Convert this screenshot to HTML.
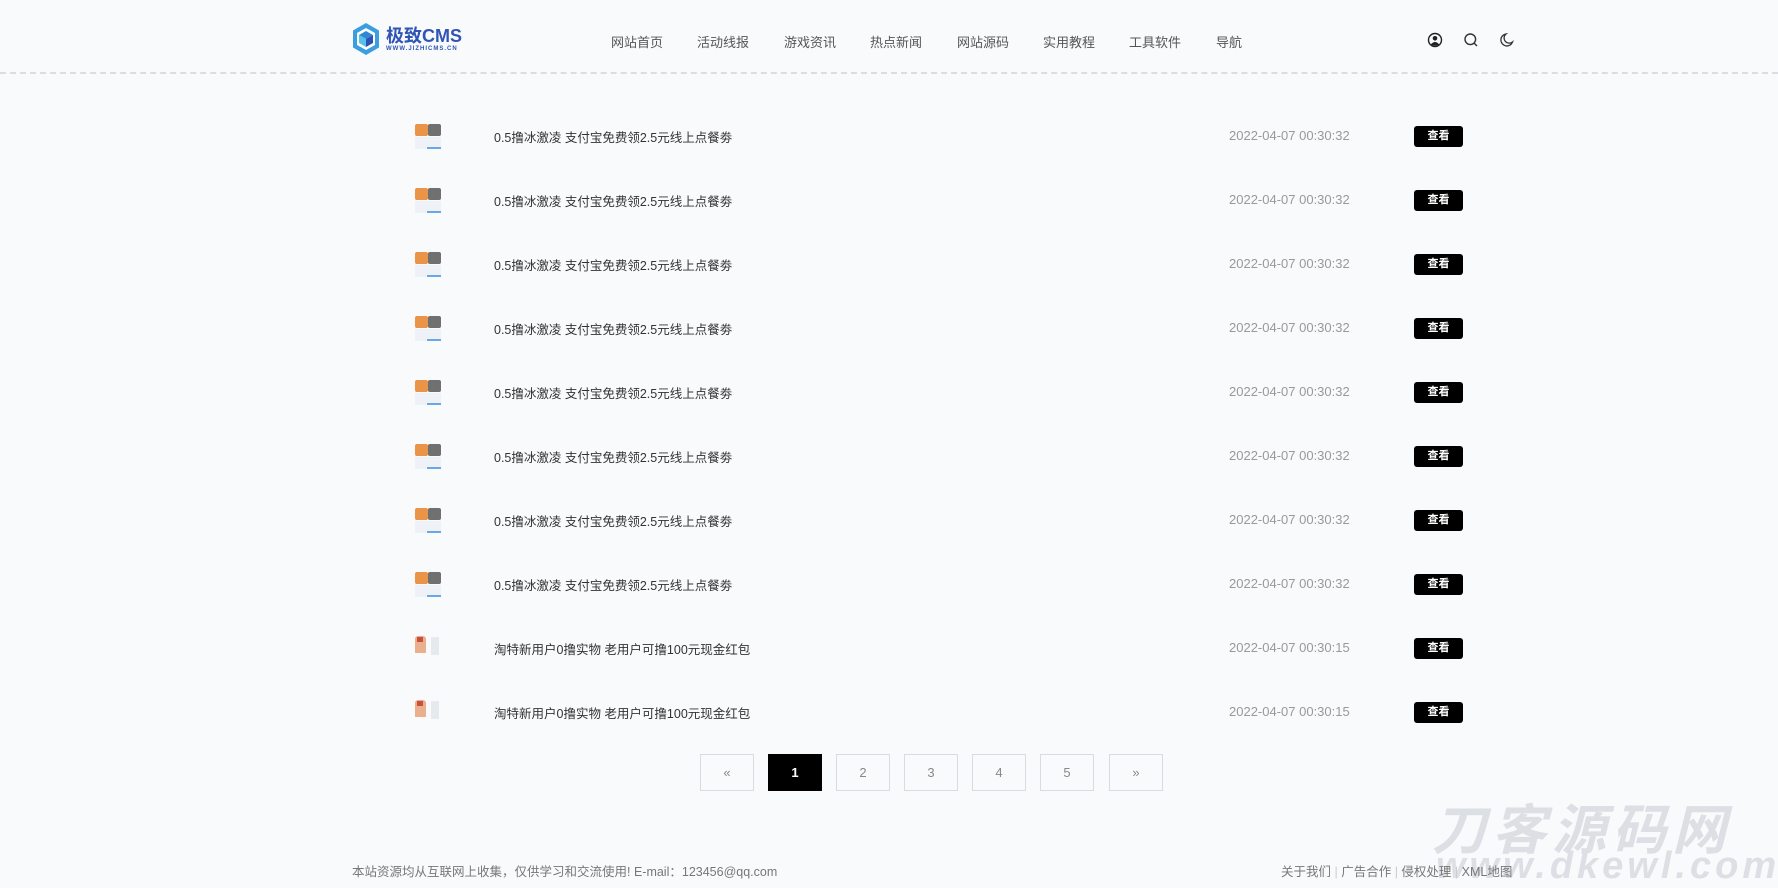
<!DOCTYPE html>
<html><head><meta charset="utf-8"><style>
*{margin:0;padding:0;box-sizing:border-box}
body{width:1778px;height:885px;background:#f9fafc;font-family:"Liberation Sans","Noto Sans CJK SC",sans-serif;position:relative;overflow:hidden;color:#333}
.hdr{position:absolute;left:0;top:0;width:1778px;height:74px;border-bottom:2px dashed #dcdde1}
.logo{position:absolute;left:352px;top:22px;display:flex;align-items:center}
.logo .t{color:#2f55b5;font-weight:bold;font-size:18px;line-height:20px}
.logo .s{color:#2f55b5;font-size:6px;letter-spacing:1px;font-weight:bold}
.nav{position:absolute;top:32px;font-size:13px;color:#555}
.ico{position:absolute;top:32px}
.row{position:absolute;left:0;width:1778px;height:30px}
.th{position:absolute;left:415px;top:0;width:27px;height:27px}
.ti{position:absolute;left:494px;top:4px;font-size:12.5px;color:#333}
.tm{position:absolute;left:1229px;top:5px;font-size:13px;color:#999}
.bt{position:absolute;left:1414px;top:3px;width:49px;height:21px;background:#000;color:#fff;border-radius:3px;font-size:11px;text-align:center;line-height:21px;font-weight:bold}
.pg{position:absolute;top:754px;width:54px;height:37px;border:1px solid #d9dbe0;text-align:center;line-height:35px;font-size:13px;color:#888}
.pg.on{background:#000;color:#fff;border-color:#000;font-weight:bold}
.ft{position:absolute;top:861px;font-size:12.5px;color:#777}
.wm{position:absolute;color:#dcdfe4;font-weight:bold;font-style:italic;white-space:nowrap}
</style></head><body>
<div class="hdr">
 <div class="logo">
  <svg width="28" height="34" viewBox="0 0 28 34"><polygon points="14,1 27,8.5 27,25.5 14,33 1,25.5 1,8.5" fill="#3a9ee0"/><polygon points="14,6 23,11 23,23 14,28 5,23 5,11" fill="#fff"/><polygon points="14,9 21,13 14,17 7,13" fill="#3186d6"/><polygon points="7,13 14,17 14,25 7,21" fill="#55c2e6"/><polygon points="21,13 14,17 14,25 21,21" fill="#2e4fb3"/></svg>
  <div style="margin-left:6px"><div class="t">极致CMS</div><div class="s">WWW.JIZHICMS.CN</div></div>
 </div>
 <div class="nav" style="left:611px">网站首页</div>
 <div class="nav" style="left:697px">活动线报</div>
 <div class="nav" style="left:784px">游戏资讯</div>
 <div class="nav" style="left:870px">热点新闻</div>
 <div class="nav" style="left:957px">网站源码</div>
 <div class="nav" style="left:1043px">实用教程</div>
 <div class="nav" style="left:1129px">工具软件</div>
 <div class="nav" style="left:1216px">导航</div>
 <svg class="ico" style="left:1427px" width="16" height="16" viewBox="0 0 16 16"><circle cx="8" cy="8" r="6.5" fill="none" stroke="#222" stroke-width="1.4"/><circle cx="8" cy="6.3" r="2.3" fill="#222"/><path d="M3.8 12.5Q8 7.5 12.2 12.5Q8 15 3.8 12.5Z" fill="#222"/></svg>
 <svg class="ico" style="left:1463px" width="16" height="16" viewBox="0 0 16 16"><circle cx="7.3" cy="7.3" r="5.3" fill="none" stroke="#333" stroke-width="1.4"/><line x1="11" y1="11" x2="14" y2="14" stroke="#333" stroke-width="1.4"/></svg>
 <svg class="ico" style="left:1499px" width="16" height="16" viewBox="0 0 16 16"><path d="M7 2A6 6 0 1 0 13.5 10A5 5 0 0 1 7 2Z" fill="none" stroke="#333" stroke-width="1.3"/></svg>
</div>

<div class="row" style="top:123px"><div class="th"><div style="position:absolute;left:0;top:1px;width:13px;height:12px;background:#e99447;border-radius:2px"></div><div style="position:absolute;left:13px;top:1px;width:13px;height:12px;background:#707070;border-radius:2px"></div><div style="position:absolute;left:0;top:14px;width:26px;height:12px;background:#eef1f6"></div><div style="position:absolute;left:12px;top:24px;width:14px;height:2px;background:#6aa7e6"></div></div><div class="ti">0.5撸冰激凌 支付宝免费领2.5元线上点餐劵</div><div class="tm">2022-04-07 00:30:32</div><div class="bt">查看</div></div>
<div class="row" style="top:187px"><div class="th"><div style="position:absolute;left:0;top:1px;width:13px;height:12px;background:#e99447;border-radius:2px"></div><div style="position:absolute;left:13px;top:1px;width:13px;height:12px;background:#707070;border-radius:2px"></div><div style="position:absolute;left:0;top:14px;width:26px;height:12px;background:#eef1f6"></div><div style="position:absolute;left:12px;top:24px;width:14px;height:2px;background:#6aa7e6"></div></div><div class="ti">0.5撸冰激凌 支付宝免费领2.5元线上点餐劵</div><div class="tm">2022-04-07 00:30:32</div><div class="bt">查看</div></div>
<div class="row" style="top:251px"><div class="th"><div style="position:absolute;left:0;top:1px;width:13px;height:12px;background:#e99447;border-radius:2px"></div><div style="position:absolute;left:13px;top:1px;width:13px;height:12px;background:#707070;border-radius:2px"></div><div style="position:absolute;left:0;top:14px;width:26px;height:12px;background:#eef1f6"></div><div style="position:absolute;left:12px;top:24px;width:14px;height:2px;background:#6aa7e6"></div></div><div class="ti">0.5撸冰激凌 支付宝免费领2.5元线上点餐劵</div><div class="tm">2022-04-07 00:30:32</div><div class="bt">查看</div></div>
<div class="row" style="top:315px"><div class="th"><div style="position:absolute;left:0;top:1px;width:13px;height:12px;background:#e99447;border-radius:2px"></div><div style="position:absolute;left:13px;top:1px;width:13px;height:12px;background:#707070;border-radius:2px"></div><div style="position:absolute;left:0;top:14px;width:26px;height:12px;background:#eef1f6"></div><div style="position:absolute;left:12px;top:24px;width:14px;height:2px;background:#6aa7e6"></div></div><div class="ti">0.5撸冰激凌 支付宝免费领2.5元线上点餐劵</div><div class="tm">2022-04-07 00:30:32</div><div class="bt">查看</div></div>
<div class="row" style="top:379px"><div class="th"><div style="position:absolute;left:0;top:1px;width:13px;height:12px;background:#e99447;border-radius:2px"></div><div style="position:absolute;left:13px;top:1px;width:13px;height:12px;background:#707070;border-radius:2px"></div><div style="position:absolute;left:0;top:14px;width:26px;height:12px;background:#eef1f6"></div><div style="position:absolute;left:12px;top:24px;width:14px;height:2px;background:#6aa7e6"></div></div><div class="ti">0.5撸冰激凌 支付宝免费领2.5元线上点餐劵</div><div class="tm">2022-04-07 00:30:32</div><div class="bt">查看</div></div>
<div class="row" style="top:443px"><div class="th"><div style="position:absolute;left:0;top:1px;width:13px;height:12px;background:#e99447;border-radius:2px"></div><div style="position:absolute;left:13px;top:1px;width:13px;height:12px;background:#707070;border-radius:2px"></div><div style="position:absolute;left:0;top:14px;width:26px;height:12px;background:#eef1f6"></div><div style="position:absolute;left:12px;top:24px;width:14px;height:2px;background:#6aa7e6"></div></div><div class="ti">0.5撸冰激凌 支付宝免费领2.5元线上点餐劵</div><div class="tm">2022-04-07 00:30:32</div><div class="bt">查看</div></div>
<div class="row" style="top:507px"><div class="th"><div style="position:absolute;left:0;top:1px;width:13px;height:12px;background:#e99447;border-radius:2px"></div><div style="position:absolute;left:13px;top:1px;width:13px;height:12px;background:#707070;border-radius:2px"></div><div style="position:absolute;left:0;top:14px;width:26px;height:12px;background:#eef1f6"></div><div style="position:absolute;left:12px;top:24px;width:14px;height:2px;background:#6aa7e6"></div></div><div class="ti">0.5撸冰激凌 支付宝免费领2.5元线上点餐劵</div><div class="tm">2022-04-07 00:30:32</div><div class="bt">查看</div></div>
<div class="row" style="top:571px"><div class="th"><div style="position:absolute;left:0;top:1px;width:13px;height:12px;background:#e99447;border-radius:2px"></div><div style="position:absolute;left:13px;top:1px;width:13px;height:12px;background:#707070;border-radius:2px"></div><div style="position:absolute;left:0;top:14px;width:26px;height:12px;background:#eef1f6"></div><div style="position:absolute;left:12px;top:24px;width:14px;height:2px;background:#6aa7e6"></div></div><div class="ti">0.5撸冰激凌 支付宝免费领2.5元线上点餐劵</div><div class="tm">2022-04-07 00:30:32</div><div class="bt">查看</div></div>
<div class="row" style="top:635px"><div class="th"><div style="position:absolute;left:0;top:1px;width:11px;height:17px;background:#eab08e;border-radius:3px 3px 0 0"></div><div style="position:absolute;left:2px;top:2px;width:6px;height:5px;background:#c4523e"></div><div style="position:absolute;left:16px;top:2px;width:8px;height:18px;background:#e6e9ee"></div></div><div class="ti">淘特新用户0撸实物 老用户可撸100元现金红包</div><div class="tm">2022-04-07 00:30:15</div><div class="bt">查看</div></div>
<div class="row" style="top:699px"><div class="th"><div style="position:absolute;left:0;top:1px;width:11px;height:17px;background:#eab08e;border-radius:3px 3px 0 0"></div><div style="position:absolute;left:2px;top:2px;width:6px;height:5px;background:#c4523e"></div><div style="position:absolute;left:16px;top:2px;width:8px;height:18px;background:#e6e9ee"></div></div><div class="ti">淘特新用户0撸实物 老用户可撸100元现金红包</div><div class="tm">2022-04-07 00:30:15</div><div class="bt">查看</div></div>

<div class="pg" style="left:700px">«</div>
<div class="pg on" style="left:768px">1</div>
<div class="pg" style="left:836px">2</div>
<div class="pg" style="left:904px">3</div>
<div class="pg" style="left:972px">4</div>
<div class="pg" style="left:1040px">5</div>
<div class="pg" style="left:1109px">»</div>

<div class="wm" style="left:1432px;top:786px;font-size:54px;letter-spacing:6px">刀客源码网</div>
<div class="wm" style="left:1436px;top:845px;font-size:38px;letter-spacing:4px">www.dkewl.com</div>

<div class="ft" style="left:352px">本站资源均从互联网上收集，仅供学习和交流使用! E-mail：123456@qq.com</div>
<div class="ft" style="left:1281px">关于我们 <span style="color:#ccc">|</span> 广告合作 <span style="color:#ccc">|</span> 侵权处理 <span style="color:#ccc">|</span> XML地图</div>
</body></html>
